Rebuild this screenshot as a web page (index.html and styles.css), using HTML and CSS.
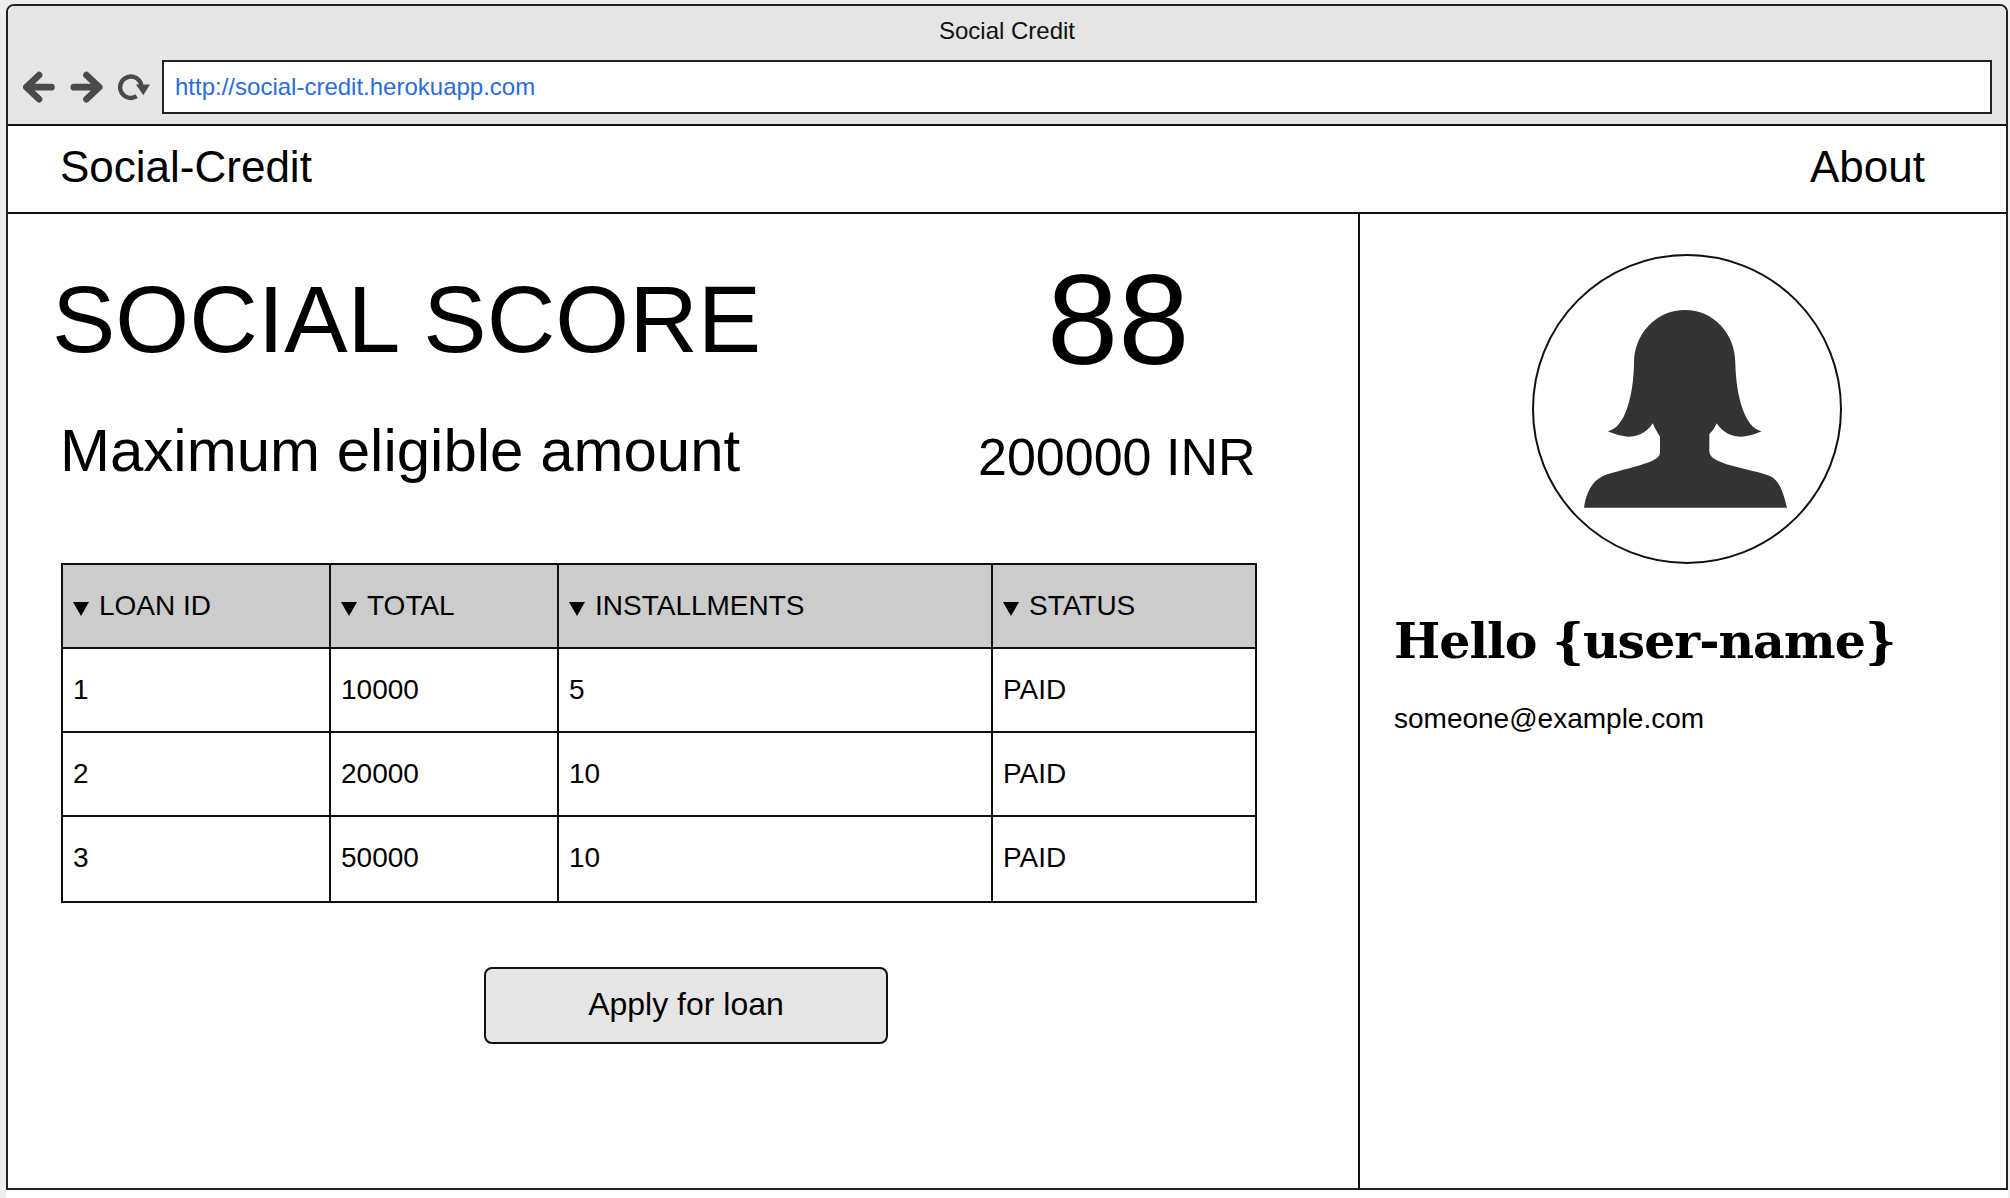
FILE: index.html
```html
<!DOCTYPE html>
<html lang="en">
<head>
<meta charset="utf-8">
<title>Social Credit</title>
<link rel="stylesheet" href="styles.css">
</head>
<body>
<div class="window">
  <header class="chrome">
    <div class="chrome-title">Social Credit</div>
    <div class="chrome-bar">
      <svg class="nav-icons" viewBox="40 30 380 95" aria-hidden="true">
        <path class="nav-stroke" d="M125 78H52M88 42L50 78L88 114"/>
        <path class="nav-stroke" d="M192 78H265M230 42L268 78L230 114"/>
        <path class="nav-ring" d="M394 72A32 32 0 1 0 380 105"/>
        <path class="nav-head" d="M378 70L420 70L400 102Z"/>
      </svg>
      <div class="url">http://social-credit.herokuapp.com</div>
    </div>
  </header>
  <nav class="topnav">
    <span>Social-Credit</span>
    <span>About</span>
  </nav>
  <div class="body">
    <main class="main">
      <div class="row score-row">
        <h1 class="score-label">SOCIAL SCORE</h1>
        <div class="score-value">88</div>
      </div>
      <div class="row amount-row">
        <div class="amount-label">Maximum eligible amount</div>
        <div class="amount-value">200000 INR</div>
      </div>
      <table class="loans">
        <colgroup><col class="c1"><col class="c2"><col class="c3"><col class="c4"></colgroup>
        <thead>
          <tr>
            <th><span class="caret"></span>LOAN ID</th>
            <th><span class="caret"></span>TOTAL</th>
            <th><span class="caret"></span>INSTALLMENTS</th>
            <th><span class="caret"></span>STATUS</th>
          </tr>
        </thead>
        <tbody>
          <tr><td>1</td><td>10000</td><td>5</td><td>PAID</td></tr>
          <tr><td>2</td><td>20000</td><td>10</td><td>PAID</td></tr>
          <tr class="last"><td>3</td><td>50000</td><td>10</td><td>PAID</td></tr>
        </tbody>
      </table>
      <div class="actions"><button class="apply">Apply for loan</button></div>
    </main>
    <aside class="side">
      <div class="avatar">
        <svg viewBox="0 0 1200 1080" class="avatar-img" aria-hidden="true">
          <path d="M252 833C258 790 275 755 305 740C345 722 440 707 470 685C480 677 480 670 480 660L480 620C470 605 462 590 458 580C440 610 410 620 385 620C365 620 345 612 323 604C375 595 400 500 402 400C402 310 470 240 555 240C640 240 706 310 706 400C708 500 735 595 785 604C765 612 745 620 725 620C695 620 670 610 650 580C645 592 637 605 628 612L628 660C628 672 632 680 645 688C680 710 770 722 810 738C840 752 850 790 861 833Z"/>
        </svg>
      </div>
      <h2 class="hello">Hello {user-name}</h2>
      <div class="email">someone@example.com</div>
    </aside>
  </div>
</div>
</body>
</html>
```
FILE: styles.css
```css
* { box-sizing: border-box; }
html, body { margin: 0; height: 100%; }
body {
  background: linear-gradient(#fff, #fff) 6px 1190px / 2002px 8px no-repeat, #eee;
  font-family: "Liberation Sans", Arial, sans-serif;
  color: #000;
  padding: 4px 2px 8px 6px;
  height: 1198px;
  width: 2010px;
  overflow: hidden;
}
.window {
  height: 1186px;
  border: 2px solid #222;
  border-radius: 8px 8px 0 0;
  display: flex;
  flex-direction: column;
  overflow: hidden;
  background: #fff;
}
.chrome { background: #e5e5e5; height: 120px; border-bottom: 2px solid #111; flex: none; }
.chrome-title { text-align: center; font-size: 24px; line-height: 28px; padding-top: 11px; height: 54px; color: #111; }
.chrome-bar { display: flex; align-items: center; padding: 0 14px 0 15px; gap: 12px; }
.nav-icons { width: 127px; height: 32px; flex: none; }
.nav-stroke { fill: none; stroke: #4a4a4a; stroke-width: 20; stroke-linecap: round; stroke-linejoin: round; }
.nav-ring { fill: none; stroke: #4a4a4a; stroke-width: 13; }
.nav-head { fill: #4a4a4a; }
.url { flex: 1; height: 54px; background: #fff; border: 2px solid #222; color: #2a6ddb; font-size: 24px; line-height: 50px; padding-left: 11px; }
.topnav { height: 88px; border-bottom: 2px solid #111; display: flex; justify-content: space-between; align-items: center; font-size: 44px; padding: 0 81px 5px 52px; flex: none; }
.body { flex: 1; display: flex; min-height: 0; }
.main { width: 1352px; border-right: 2px solid #111; flex: none; padding: 0 0 0 53px; }
.row { display: flex; width: 1194px; }
.score-row { height: 160px; padding-top: 50px; align-items: center; }
.score-label { margin: 0 0 0 -9px; font-weight: 400; font-size: 95px; width: 995px; flex: none; }
.score-value { font-size: 128px; }
.amount-row { height: 110px; margin-top: 21px; align-items: center; }
.amount-label { font-size: 60px; width: 917px; flex: none; margin-left: -1px; }
.amount-value { font-size: 52px; padding-top: 14px; white-space: nowrap; margin-left: 1px; }
.loans { border-collapse: collapse; table-layout: fixed; width: 1194px; margin-top: 58px; border: 2px solid #111; font-size: 28px; }
.c1 { width: 268px; } .c2 { width: 228px; } .c3 { width: 434px; } .c4 { width: 264px; }
.loans th, .loans td { border: 2px solid #111; height: 84px; padding: 0 10px; text-align: left; font-weight: 400; }
.loans .last td { height: 86px; padding-bottom: 2px; }
.loans th { background: #ccc; padding-bottom: 1px; }
.caret { display: inline-block; width: 0; height: 0; border-left: 8px solid transparent; border-right: 8px solid transparent; border-top: 14px solid #000; margin-right: 10px; vertical-align: -1px; }
.actions { display: flex; justify-content: center; width: 1194px; padding-left: 56px; margin-top: 64px; }
.apply { width: 404px; height: 77px; background: #e5e5e5; border: 2px solid #111; border-radius: 8px; padding: 0 0 2px; font: 400 32px "Liberation Sans", Arial, sans-serif; color: #000; }
.side { flex: 1; padding: 40px 0 0 34px; }
.avatar { width: 310px; height: 310px; border: 2px solid #111; border-radius: 50%; margin-left: 138px; position: relative; }
.avatar-img { position: absolute; left: -34px; top: -26px; width: 400px; height: 360px; fill: #333; }
.hello { font-family: "DejaVu Serif", serif; font-size: 49px; letter-spacing: -1px; font-weight: 700; margin: 48px 0 0; }
.email { font-size: 28px; margin-top: 33px; }
```
